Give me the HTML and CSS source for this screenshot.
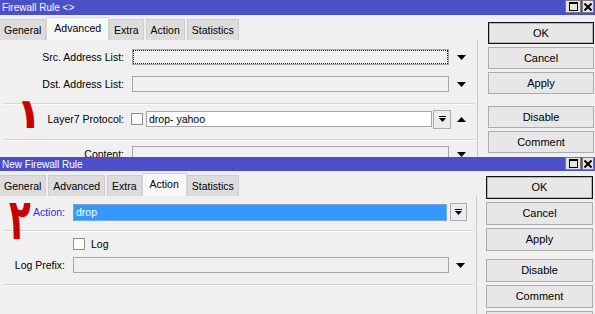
FILE: index.html
```html
<!DOCTYPE html>
<html lang="en">

<head>
    <meta charset="utf-8">
    <title>Firewall Rule</title>
    <link rel="stylesheet" href="styles.css">
</head>

<body>
    <!-- window 1: Firewall Rule, Advanced tab -->
    <div class="win win1">
        <div class="titlebar">
            <span class="title">Firewall Rule &lt;&gt;</span>
            <span class="tbtns">
                <span class="tbtn tbtn-max"><svg width="9" height="9" viewBox="0 0 9 9"><rect x="0.5" y="0.5" width="8" height="8" fill="none" stroke="#000"/><rect x="0" y="0" width="9" height="2" fill="#000"/></svg></span>
                <span class="tbtn tbtn-close"><svg width="8" height="8" viewBox="0 0 8 8"><path d="M0.5 0.5L7.5 7.5M7.5 0.5L0.5 7.5" stroke="#000" stroke-width="2"/></svg></span>
            </span>
        </div>
        <div class="body">
            <div class="main">
                <div class="tabs">
                    <span class="tab first">General</span>
                    <span class="tab active">Advanced</span>
                    <span class="tab">Extra</span>
                    <span class="tab">Action</span>
                    <span class="tab">Statistics</span>
                </div>
                <div class="panel">
                    <div class="row">
                        <span class="lbl">Src. Address List:</span>
                        <span class="input focus"></span>
                        <span class="arrow"><svg width="9" height="5" viewBox="0 0 9 5"><polygon points="0,0 9,0 4.5,5" fill="#000"/></svg></span>
                    </div>
                    <div class="row">
                        <span class="lbl">Dst. Address List:</span>
                        <span class="input"></span>
                        <span class="arrow"><svg width="9" height="5" viewBox="0 0 9 5"><polygon points="0,0 9,0 4.5,5" fill="#000"/></svg></span>
                    </div>
                    <div class="sep"></div>
                    <div class="row row-tall">
                        <span class="lbl">Layer7 Protocol:</span>
                        <span class="combo">
                            <span class="check"></span>
                            <span class="input white">drop- yahoo</span>
                            <span class="dbtn"><svg width="7" height="7" viewBox="0 0 7 7"><rect x="0" y="0" width="7" height="1" fill="#000"/><polygon points="0,2 7,2 3.5,6" fill="#000"/></svg></span>
                        </span>
                        <span class="arrow narrow"><svg width="9" height="5" viewBox="0 0 9 5"><polygon points="0,5 9,5 4.5,0" fill="#000"/></svg></span>
                    </div>
                    <div class="sep"></div>
                    <div class="row">
                        <span class="lbl">Content:</span>
                        <span class="input"></span>
                        <span class="arrow"><svg width="9" height="5" viewBox="0 0 9 5"><polygon points="0,0 9,0 4.5,5" fill="#000"/></svg></span>
                    </div>
                </div>
            </div>
            <div class="btns">
                <span class="btn default">OK</span>
                <span class="btn">Cancel</span>
                <span class="btn">Apply</span>
                <span class="btn spaced">Disable</span>
                <span class="btn">Comment</span>
            </div>
        </div>
        <span class="note note1">۱</span>
    </div>

    <!-- window 2: New Firewall Rule, Action tab -->
    <div class="win win2">
        <div class="titlebar">
            <span class="title">New Firewall Rule</span>
            <span class="tbtns">
                <span class="tbtn tbtn-max"><svg width="9" height="9" viewBox="0 0 9 9"><rect x="0.5" y="0.5" width="8" height="8" fill="none" stroke="#000"/><rect x="0" y="0" width="9" height="2" fill="#000"/></svg></span>
                <span class="tbtn tbtn-close"><svg width="8" height="8" viewBox="0 0 8 8"><path d="M0.5 0.5L7.5 7.5M7.5 0.5L0.5 7.5" stroke="#000" stroke-width="2"/></svg></span>
            </span>
        </div>
        <div class="body">
            <div class="main">
                <div class="tabs">
                    <span class="tab first">General</span>
                    <span class="tab">Advanced</span>
                    <span class="tab">Extra</span>
                    <span class="tab active">Action</span>
                    <span class="tab">Statistics</span>
                </div>
                <div class="panel">
                    <div class="row">
                        <span class="lbl blue">Action:</span>
                        <span class="input selected">drop</span>
                        <span class="dbtn small"><svg width="7" height="7" viewBox="0 0 7 7"><rect x="0" y="0" width="7" height="1" fill="#000"/><polygon points="0,2 7,2 3.5,6" fill="#000"/></svg></span>
                    </div>
                    <div class="sep"></div>
                    <div class="row row-check">
                        <span class="lbl"></span>
                        <span class="check"></span>
                        <span class="check-text">Log</span>
                    </div>
                    <div class="row">
                        <span class="lbl">Log Prefix:</span>
                        <span class="input"></span>
                        <span class="arrow"><svg width="9" height="5" viewBox="0 0 9 5"><polygon points="0,0 9,0 4.5,5" fill="#000"/></svg></span>
                    </div>
                    <div class="sep"></div>
                </div>
            </div>
            <div class="btns">
                <span class="btn default">OK</span>
                <span class="btn">Cancel</span>
                <span class="btn">Apply</span>
                <span class="btn spaced">Disable</span>
                <span class="btn">Comment</span>
                <span class="btn">Copy</span>
            </div>
        </div>
        <span class="note note2">۲</span>
    </div>
</body>

</html>
```

FILE: styles.css
```css
    /* page */
    body {
        margin: 0;
        width: 595px;
        height: 314px;
        overflow: hidden;
        background: #f0f0f0;
        font-family: "Liberation Sans", Arial, sans-serif;
        font-size: 10.5px;
        color: #000;
    }

    /* window */
    .win {
        position: relative;
        overflow: hidden;
        background: #f0f0f0;
    }

    .win1 {
        height: 157px;
    }

    .win2 {
        height: 157px;
    }

    .titlebar {
        display: flex;
        justify-content: space-between;
        align-items: center;
        height: 15px;
        padding-left: 2px;
        background: #4b50c8;
        color: #fff;
    }

    .win2 .titlebar {
        height: 14px;
    }

    .title {
        font-size: 10px;
    }

    .tbtns {
        display: flex;
        align-self: flex-start;
        gap: 1px;
        margin-right: 1px;
    }

    .tbtn {
        display: flex;
        align-items: center;
        justify-content: center;
        height: 13px;
        box-sizing: border-box;
        background: #e4e4e4;
        border: 1px solid #7c7c7c;
    }

    .tbtn-max {
        width: 16px;
    }

    .tbtn-close {
        width: 12px;
    }

    .body {
        display: flex;
    }

    /* tabs */
    .main {
        width: 478px;
        flex: none;
    }

    .win2 .main {
        width: 477px;
    }

    .tabs {
        display: flex;
        align-items: flex-end;
        gap: 2px;
        height: 25px;
    }

    .tab {
        height: 21px;
        line-height: 20px;
        padding: 0 4px;
        box-sizing: border-box;
        background: #dcdcdc;
        border: 1px solid #cdcdcd;
        border-bottom: none;
        white-space: nowrap;
    }

    .tab.first {
        margin-left: -1px;
    }

    .tab.active {
        height: 23px;
        line-height: 20px;
        margin: 0 -2px;
        padding: 0 7px;
        background: #f7f7f7;
        border-color: #d6d6d6;
        position: relative;
    }

    .panel {
        height: 200px;
        padding-top: 8px;
        box-sizing: border-box;
        border-right: 1px solid #cacaca;
    }

    .win2 .panel {
        padding-top: 7px;
    }

    /* form rows */
    .row {
        display: flex;
        align-items: center;
        height: 18px;
    }

    .row + .row {
        margin-top: 9px;
    }

    .row-tall {
        height: 20px;
    }

    .lbl {
        flex: none;
        width: 124px;
        margin-right: 8px;
        text-align: right;
        white-space: nowrap;
    }

    .win2 .lbl {
        width: 65px;
    }

    .lbl.blue {
        color: #2e2ed8;
    }

    .input {
        flex: none;
        width: 317px;
        height: 16px;
        line-height: 14px;
        padding-left: 2px;
        box-sizing: border-box;
        background: #f0f0f0;
        border: 1px solid #a6a6a6;
        white-space: nowrap;
    }

    .win2 .input {
        width: 376px;
    }

    .input.focus {
        outline: 1px dotted #222;
        outline-offset: -2px;
    }

    .input.white {
        flex: 1;
        width: auto;
        background: #fff;
        margin-right: 1px;
    }

    .win2 .input.selected {
        width: 374px;
        height: 17px;
        line-height: 15px;
        margin-right: 3px;
        background: #3399ff;
        border-color: #7aa6d6;
        color: #fff;
    }

    .arrow {
        display: flex;
        justify-content: center;
        width: 24px;
    }

    .win2 .arrow {
        width: 22px;
    }

    .arrow.narrow {
        width: 20px;
    }

    .combo {
        display: flex;
        align-items: center;
        width: 320px;
        margin-left: -1px;
    }

    .check {
        flex: none;
        width: 12px;
        height: 12px;
        margin-right: 3px;
        box-sizing: border-box;
        background: #fbfbfb;
        border: 1px solid #8f8f8f;
    }

    .dbtn {
        display: flex;
        align-items: center;
        justify-content: center;
        flex: none;
        width: 18px;
        height: 19px;
        box-sizing: border-box;
        background: #ececec;
        border: 1px solid #adadad;
    }

    .dbtn.small {
        width: 17px;
        height: 18px;
    }

    .sep {
        margin: 10px 2px 4px 3px;
        border-top: 1px solid #d6d6d6;
        border-bottom: 1px solid #fbfbfb;
    }

    .win2 .sep {
        margin-top: 9px;
    }

    .win2 .sep + .row-check {
        height: 15px;
        margin-top: 0;
    }

    .row-check .check {
        margin-right: 6px;
    }

    .win2 .row-check + .row {
        margin-top: 5px;
    }

    .win2 .row + .sep {
        margin-top: 10px;
    }

    .win2 .panel > .row:first-child + .sep {
        margin-top: 9px;
    }

    /* button column */
    .btns {
        display: flex;
        flex-direction: column;
        gap: 3px;
        width: 106px;
        margin-left: 10px;
        padding-top: 7px;
    }

    .win2 .btns {
        width: 107px;
        margin-left: 9px;
        padding-top: 5px;
    }

    .btn {
        height: 22px;
        line-height: 20px;
        box-sizing: border-box;
        text-align: center;
        font-size: 11px;
        background: #e7e7e7;
        border: 1px solid #acacac;
    }

    .win2 .btn {
        height: 23px;
        line-height: 21px;
    }

    .btn.default {
        border-color: #111;
        box-shadow: inset 0 0 0 1px #b4b4b4;
    }

    .btn.spaced {
        margin-top: 9px;
    }

    .win2 .btn.spaced {
        margin-top: 5px;
    }

    /* red hand-written marks */
    .note {
        position: absolute;
        color: #c80000;
        font-family: "DejaVu Sans", sans-serif;
        font-weight: bold;
        line-height: 0.8;
    }

    .note1 {
        left: 16px;
        top: 97px;
        font-size: 42px;
    }

    .note2 {
        left: 9px;
        top: 40px;
        font-size: 42px;
        transform: scale(0.85, 1.35);
        transform-origin: left top;
    }
```
